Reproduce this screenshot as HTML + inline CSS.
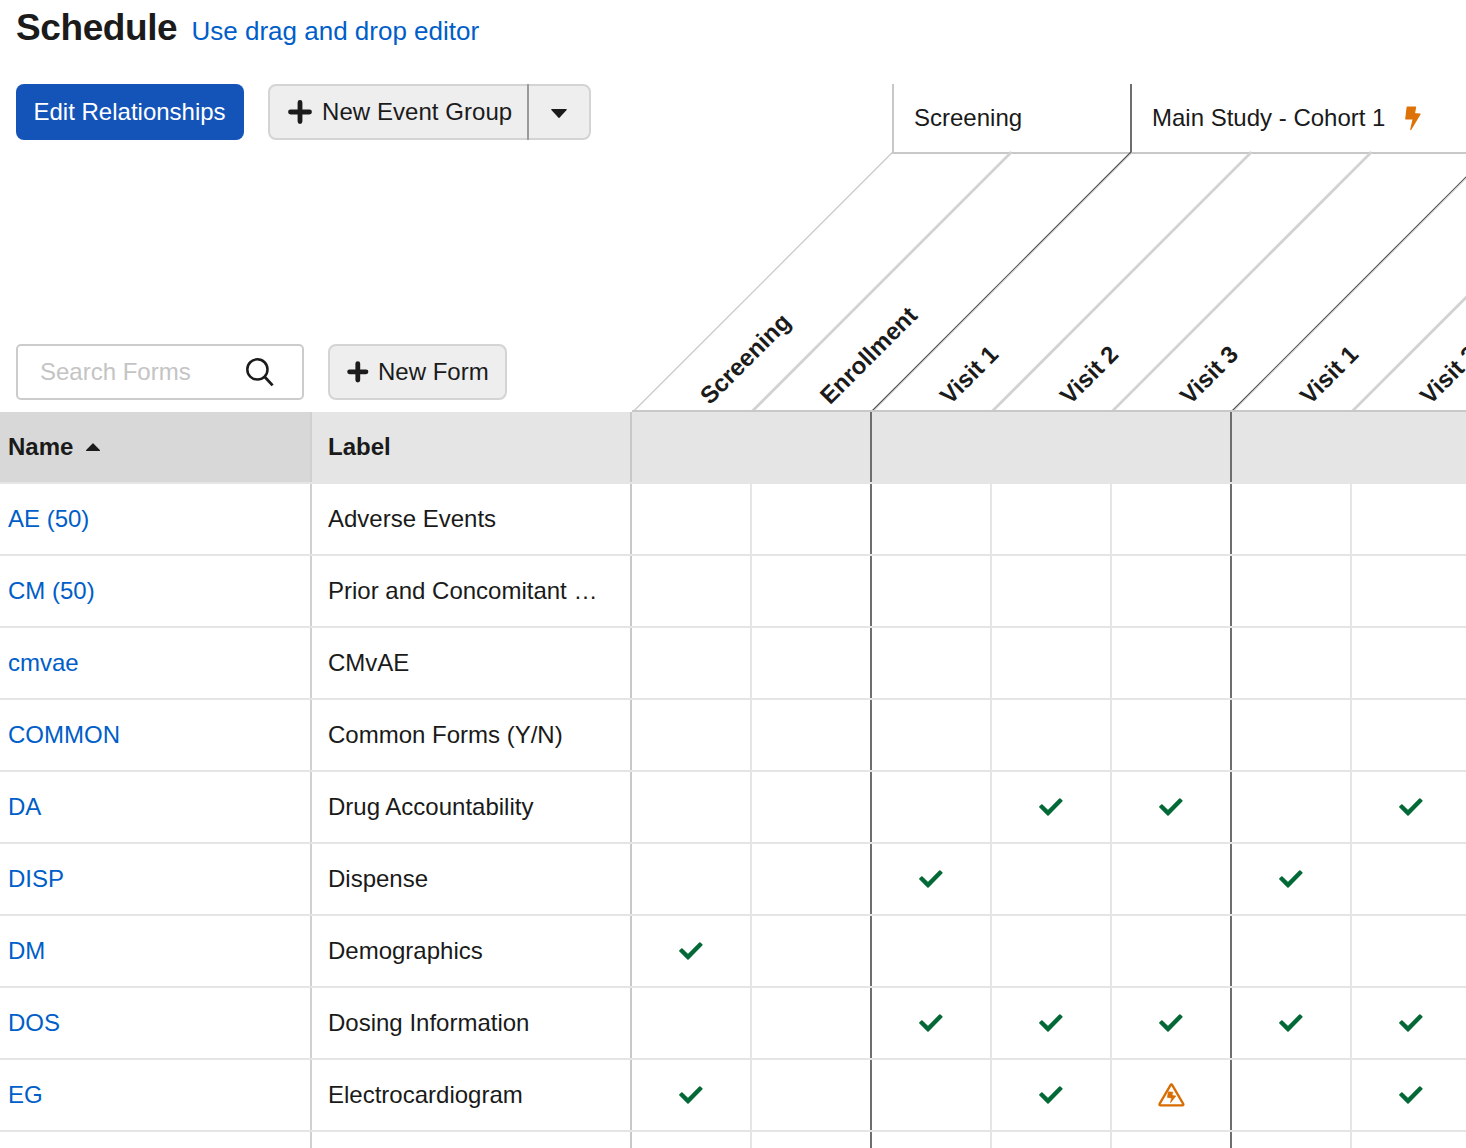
<!DOCTYPE html>
<html><head><meta charset="utf-8">
<style>
*{box-sizing:border-box;margin:0;padding:0}
html,body{width:1466px;height:1148px;overflow:hidden;background:#fff}
body{position:relative;font-family:"Liberation Sans",sans-serif;color:#1a1a1a;font-size:24px}
.abs{position:absolute;white-space:nowrap}
.title{left:16px;top:5.6px;font-size:37px;letter-spacing:-0.4px;font-weight:bold;line-height:44px;color:#1b1b1b}
.link{left:191.5px;top:15px;font-size:26px;line-height:32px;color:#005ec8}
.btn-primary{left:16px;top:84px;width:228px;height:56px;background:#1454b9;border-radius:8px;color:#fff;line-height:55px;padding-left:17.5px}
.btn{background:#eeeeee;border:2px solid #d4d4d4;border-radius:8px;color:#1b1b1b}
.neg{left:268px;top:84px;width:323px;height:56px}
.neg .div{position:absolute;left:257px;top:-2px;width:2px;height:56px;background:#9a9a9a}
.grp{top:84px;height:70px;border-bottom:2px solid #c8c8c8;line-height:68px;padding-left:20px}
.search{left:16px;top:344px;width:288px;height:56px;border:2px solid #cccccc;border-radius:5px;color:#c4c4c4;line-height:52px;padding-left:22px}
.nf{left:328px;top:344px;width:179px;height:56px;line-height:52px}
.hdr{top:412px;height:72px;background:#e5e5e5}
.row-line{left:0;width:1466px;height:2px;background:#e5e5e5}
.vline{width:2px}
.name{left:8px;color:#005ec8;line-height:32px}
.lbl{left:328px;line-height:32px}
.hb{font-weight:bold;line-height:32px}
svg.ck{position:absolute;width:24px;height:24px}
</style></head><body>
<div class="abs title">Schedule</div>
<div class="abs link">Use drag and drop editor</div>

<div class="abs btn-primary">Edit Relationships</div>
<div class="abs btn neg">
  <svg style="position:absolute;left:18px;top:14px" width="24" height="24" viewBox="0 0 24 24"><path d="M12 2.5V21.5M2.5 12H21.5" stroke="#1b1b1b" stroke-width="4.8" stroke-linecap="round"/></svg>
  <span class="abs" style="left:52px;top:10px;line-height:32px;letter-spacing:0.05px">New Event Group</span>
  <div class="div"></div>
  <svg style="position:absolute;left:280px;top:22px" width="18" height="12" viewBox="0 0 18 12"><path d="M1.8 1.6H16.2L9 9.4Z" fill="#1b1b1b" stroke="#1b1b1b" stroke-width="1.2" stroke-linejoin="round"/></svg>
</div>

<!-- group headers -->
<div class="abs grp" style="left:892px;width:240px;border-left:2px solid #c8c8c8;">Screening</div>
<div class="abs grp" style="left:1130px;width:340px;border-left:2px solid #6e6e6e;">Main Study - Cohort 1</div>
<svg class="abs" style="left:1400px;top:100px" width="30" height="36" viewBox="0 0 30 36"><path d="M7.2 7H15.6L14.4 13.7L20 14.2L10.8 29.5L13.2 18.9H5.8Z" fill="#dd7208" stroke="#dd7208" stroke-width="1.2" stroke-linejoin="round"/></svg>

<!-- diagonal lines -->
<svg class="abs" style="left:0;top:0" width="1466" height="1148">
  <g fill="none">
    <line x1="632.8" y1="412" x2="892.8" y2="152" stroke="#cacaca" stroke-width="1.3"/>
    <line x1="751.5" y1="412" x2="1011.5" y2="152" stroke="#d2d2d2" stroke-width="2.7"/>
    <line x1="871" y1="412" x2="1131" y2="152" stroke="#505050" stroke-width="1.2"/>
    <line x1="872.6" y1="412" x2="1132.6" y2="152" stroke="#c8c8c8" stroke-width="1"/>
    <line x1="991.5" y1="412" x2="1251.5" y2="152" stroke="#d2d2d2" stroke-width="2.7"/>
    <line x1="1111.5" y1="412" x2="1371.5" y2="152" stroke="#d2d2d2" stroke-width="2.7"/>
    <line x1="1231" y1="412" x2="1491" y2="152" stroke="#505050" stroke-width="1.2"/>
    <line x1="1232.6" y1="412" x2="1492.6" y2="152" stroke="#c8c8c8" stroke-width="1"/>
    <line x1="1351.5" y1="412" x2="1611.5" y2="152" stroke="#d2d2d2" stroke-width="2.7"/>
  </g>
  <g font-family="Liberation Sans" font-weight="bold" font-size="24" fill="#1b1b1b">
    <text transform="translate(710 405.5) rotate(-45)">Screening</text>
    <text transform="translate(830 405.5) rotate(-45)">Enrollment</text>
    <text transform="translate(950 405.5) rotate(-45)">Visit 1</text>
    <text transform="translate(1070 405.5) rotate(-45)">Visit 2</text>
    <text transform="translate(1190 405.5) rotate(-45)">Visit 3</text>
    <text transform="translate(1310 405.5) rotate(-45)">Visit 1</text>
    <text transform="translate(1430 405.5) rotate(-45)">Visit 2</text>
  </g>
</svg>

<div class="abs search">Search Forms
  <svg style="position:absolute;left:226px;top:10px" width="34" height="34" viewBox="0 0 34 34"><circle cx="13.4" cy="13.4" r="10.1" stroke="#1b1b1b" stroke-width="2.5" fill="none"/><path d="M20.6 20.8L28.6 29.4" stroke="#1b1b1b" stroke-width="2.8"/></svg>
</div>
<div class="abs btn nf">
  <svg style="position:absolute;left:17px;top:15px" width="22" height="22" viewBox="0 0 22 22"><path d="M10.8 2.6V19M2.6 10.8H19" stroke="#1b1b1b" stroke-width="4.8" stroke-linecap="round"/></svg>
  <span class="abs" style="left:48px;top:10px;line-height:32px">New Form</span>
</div>

<!-- table header -->
<div class="abs hdr" style="left:0;width:310px;background:#d8d8d8"></div>
<div class="abs hdr" style="left:312px;width:1154px"></div>
<div class="abs" style="left:310px;top:412px;width:2px;height:736px;background:#d0d0d0"></div>
<div class="abs" style="left:630px;top:412px;width:2px;height:736px;background:#c8c8c8"></div>
<div class="abs" style="left:632px;top:410px;width:834px;height:2px;background:#c8c8c8"></div>
<div class="abs hb" style="left:8px;top:431px">Name</div>
<svg class="abs" style="left:85px;top:441px" width="18" height="12" viewBox="0 0 18 12"><path d="M1.6 9.4H14.4L8 3Z" fill="#1b1b1b" stroke="#1b1b1b" stroke-width="1.2" stroke-linejoin="round"/></svg>
<div class="abs hb" style="left:328px;top:431px">Label</div>

<div class="abs" style="left:750px;top:484px;width:2px;height:664px;background:#e5e5e5"></div>
<div class="abs" style="left:870px;top:412px;width:2px;height:736px;background:#6e6e6e"></div>
<div class="abs" style="left:990px;top:484px;width:2px;height:664px;background:#e5e5e5"></div>
<div class="abs" style="left:1110px;top:484px;width:2px;height:664px;background:#e5e5e5"></div>
<div class="abs" style="left:1230px;top:412px;width:2px;height:736px;background:#6e6e6e"></div>
<div class="abs" style="left:1350px;top:484px;width:2px;height:664px;background:#e5e5e5"></div>
<div class="abs row-line" style="top:482px"></div>
<div class="abs row-line" style="top:554px"></div>
<div class="abs name" style="top:503px">AE (50)</div>
<div class="abs lbl" style="top:503px">Adverse Events</div>
<div class="abs row-line" style="top:626px"></div>
<div class="abs name" style="top:575px">CM (50)</div>
<div class="abs lbl" style="top:575px">Prior and Concomitant …</div>
<div class="abs row-line" style="top:698px"></div>
<div class="abs name" style="top:647px">cmvae</div>
<div class="abs lbl" style="top:647px">CMvAE</div>
<div class="abs row-line" style="top:770px"></div>
<div class="abs name" style="top:719px">COMMON</div>
<div class="abs lbl" style="top:719px">Common Forms (Y/N)</div>
<div class="abs row-line" style="top:842px"></div>
<div class="abs name" style="top:791px">DA</div>
<div class="abs lbl" style="top:791px">Drug Accountability</div>
<svg class="ck" style="left:1039px;top:795px" viewBox="0 0 24 24"><path d="M1.03 11.96L9.01 19.84L22.69 5.95L20.84 4.13L8.99 16.16L2.85 10.11Z" fill="#036a37" stroke="#036a37" stroke-width="1.8" stroke-linejoin="round"/></svg>
<svg class="ck" style="left:1159px;top:795px" viewBox="0 0 24 24"><path d="M1.03 11.96L9.01 19.84L22.69 5.95L20.84 4.13L8.99 16.16L2.85 10.11Z" fill="#036a37" stroke="#036a37" stroke-width="1.8" stroke-linejoin="round"/></svg>
<svg class="ck" style="left:1399px;top:795px" viewBox="0 0 24 24"><path d="M1.03 11.96L9.01 19.84L22.69 5.95L20.84 4.13L8.99 16.16L2.85 10.11Z" fill="#036a37" stroke="#036a37" stroke-width="1.8" stroke-linejoin="round"/></svg>
<div class="abs row-line" style="top:914px"></div>
<div class="abs name" style="top:863px">DISP</div>
<div class="abs lbl" style="top:863px">Dispense</div>
<svg class="ck" style="left:919px;top:867px" viewBox="0 0 24 24"><path d="M1.03 11.96L9.01 19.84L22.69 5.95L20.84 4.13L8.99 16.16L2.85 10.11Z" fill="#036a37" stroke="#036a37" stroke-width="1.8" stroke-linejoin="round"/></svg>
<svg class="ck" style="left:1279px;top:867px" viewBox="0 0 24 24"><path d="M1.03 11.96L9.01 19.84L22.69 5.95L20.84 4.13L8.99 16.16L2.85 10.11Z" fill="#036a37" stroke="#036a37" stroke-width="1.8" stroke-linejoin="round"/></svg>
<div class="abs row-line" style="top:986px"></div>
<div class="abs name" style="top:935px">DM</div>
<div class="abs lbl" style="top:935px">Demographics</div>
<svg class="ck" style="left:679px;top:939px" viewBox="0 0 24 24"><path d="M1.03 11.96L9.01 19.84L22.69 5.95L20.84 4.13L8.99 16.16L2.85 10.11Z" fill="#036a37" stroke="#036a37" stroke-width="1.8" stroke-linejoin="round"/></svg>
<div class="abs row-line" style="top:1058px"></div>
<div class="abs name" style="top:1007px">DOS</div>
<div class="abs lbl" style="top:1007px">Dosing Information</div>
<svg class="ck" style="left:919px;top:1011px" viewBox="0 0 24 24"><path d="M1.03 11.96L9.01 19.84L22.69 5.95L20.84 4.13L8.99 16.16L2.85 10.11Z" fill="#036a37" stroke="#036a37" stroke-width="1.8" stroke-linejoin="round"/></svg>
<svg class="ck" style="left:1039px;top:1011px" viewBox="0 0 24 24"><path d="M1.03 11.96L9.01 19.84L22.69 5.95L20.84 4.13L8.99 16.16L2.85 10.11Z" fill="#036a37" stroke="#036a37" stroke-width="1.8" stroke-linejoin="round"/></svg>
<svg class="ck" style="left:1159px;top:1011px" viewBox="0 0 24 24"><path d="M1.03 11.96L9.01 19.84L22.69 5.95L20.84 4.13L8.99 16.16L2.85 10.11Z" fill="#036a37" stroke="#036a37" stroke-width="1.8" stroke-linejoin="round"/></svg>
<svg class="ck" style="left:1279px;top:1011px" viewBox="0 0 24 24"><path d="M1.03 11.96L9.01 19.84L22.69 5.95L20.84 4.13L8.99 16.16L2.85 10.11Z" fill="#036a37" stroke="#036a37" stroke-width="1.8" stroke-linejoin="round"/></svg>
<svg class="ck" style="left:1399px;top:1011px" viewBox="0 0 24 24"><path d="M1.03 11.96L9.01 19.84L22.69 5.95L20.84 4.13L8.99 16.16L2.85 10.11Z" fill="#036a37" stroke="#036a37" stroke-width="1.8" stroke-linejoin="round"/></svg>
<div class="abs row-line" style="top:1130px"></div>
<div class="abs name" style="top:1079px">EG</div>
<div class="abs lbl" style="top:1079px">Electrocardiogram</div>
<svg class="ck" style="left:679px;top:1083px" viewBox="0 0 24 24"><path d="M1.03 11.96L9.01 19.84L22.69 5.95L20.84 4.13L8.99 16.16L2.85 10.11Z" fill="#036a37" stroke="#036a37" stroke-width="1.8" stroke-linejoin="round"/></svg>
<svg class="ck" style="left:1039px;top:1083px" viewBox="0 0 24 24"><path d="M1.03 11.96L9.01 19.84L22.69 5.95L20.84 4.13L8.99 16.16L2.85 10.11Z" fill="#036a37" stroke="#036a37" stroke-width="1.8" stroke-linejoin="round"/></svg>
<svg class="abs" style="left:1156px;top:1080px" width="32" height="28" viewBox="0 0 32 28"><path d="M4.7 25.3H26.1Q28.1 25.3 27.09 23.57L16.41 5.33Q15.4 3.6 14.39 5.33L3.71 23.57Q2.7 25.3 4.7 25.3Z" stroke="#d86c00" stroke-width="2.3" fill="none" stroke-linejoin="round"/><path d="M12.3 11.8L16.9 12.2L16 15.3L19.9 16.1L14.5 22.7L15.6 17.9L11.4 17.4Z" fill="#d86c00" stroke="#d86c00" stroke-width="0.6" stroke-linejoin="round"/></svg>
<svg class="ck" style="left:1399px;top:1083px" viewBox="0 0 24 24"><path d="M1.03 11.96L9.01 19.84L22.69 5.95L20.84 4.13L8.99 16.16L2.85 10.11Z" fill="#036a37" stroke="#036a37" stroke-width="1.8" stroke-linejoin="round"/></svg>
<div class="abs row-line" style="top:1202px"></div>
</body></html>
